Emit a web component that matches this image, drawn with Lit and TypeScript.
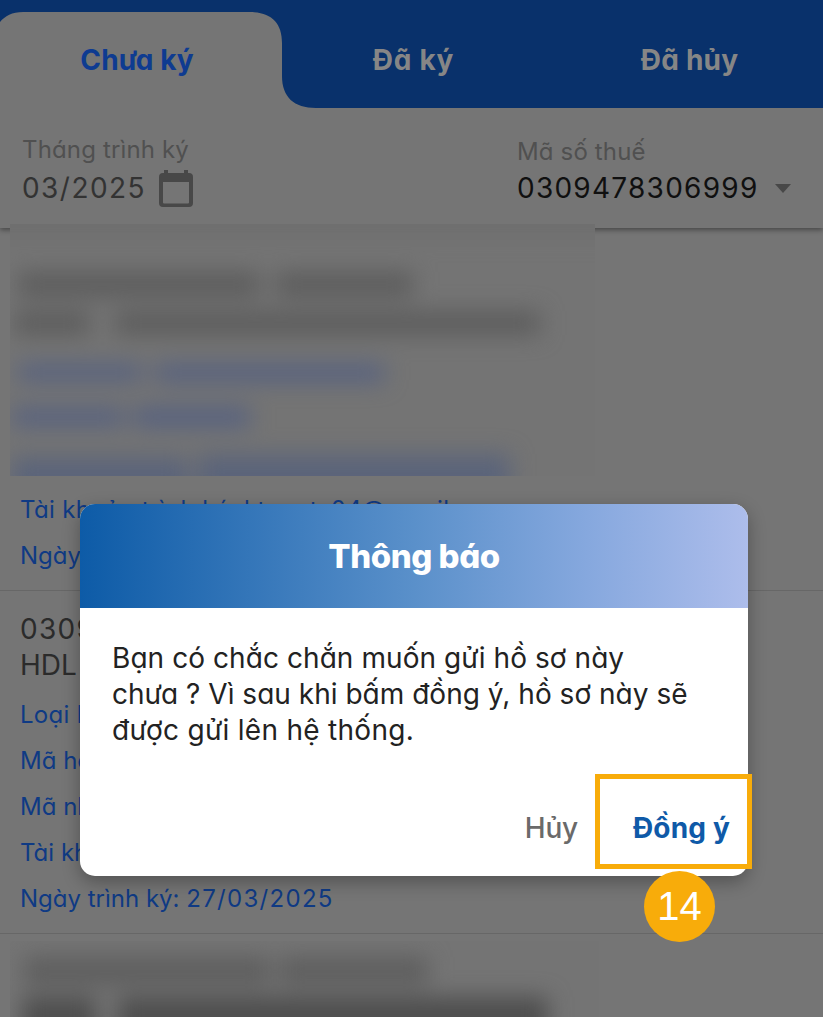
import { LitElement, html, svg, css } from "lit";
import { customElement } from "lit/decorators.js";

@customElement("redacted-block")
class RedactedBlock extends LitElement {
  static properties = { lines: { attribute: false } };
  declare lines: { x: number; y: number; w: number; h: number; c: string }[];
  static styles = css`
    :host { display: block; overflow: hidden; background: #747474; }
    svg { display: block; width: 100%; height: 100%; overflow: visible; filter: blur(11px); }
  `;
  render() {
    return html`<svg>
      ${this.lines.map((l) => svg`<rect x=${l.x} y=${l.y} width=${l.w} height=${l.h} fill=${l.c}></rect>`)}
    </svg>`;
  }
}

const DARK = "#5d5d5d";
const BLUE = "#566180";
const topLines = [
  { x: -40, y: -40, w: 680, h: 52, c: "#6e6e6e" },
  { x: 8, y: 48, w: 242, h: 25, c: DARK },
  { x: 266, y: 48, w: 137, h: 25, c: DARK },
  { x: 4, y: 87, w: 76, h: 24, c: DARK },
  { x: 105, y: 87, w: 425, h: 24, c: DARK },
  { x: 8, y: 140, w: 124, h: 17, c: BLUE },
  { x: 145, y: 140, w: 229, h: 18, c: BLUE },
  { x: 2, y: 184, w: 112, h: 18, c: BLUE },
  { x: 124, y: 183, w: 116, h: 20, c: BLUE },
  { x: 2, y: 233, w: 176, h: 40, c: "#5b647a" },
  { x: 188, y: 230, w: 312, h: 43, c: "#5b647a" },
];
const bottomLines = [
  { x: 14, y: 16, w: 246, h: 28, c: "#5e5e5e" },
  { x: 270, y: 16, w: 148, h: 28, c: "#5e5e5e" },
  { x: 12, y: 56, w: 74, h: 40, c: "#4e4e4e" },
  { x: 108, y: 56, w: 430, h: 40, c: "#4e4e4e" },
];

@customElement("app-root")
export class AppRoot extends LitElement {
  static styles = css`
    :host {
      display: block; position: relative; width: 823px; height: 1017px; overflow: hidden;
      background: #757575; font-family: Inter, "Noto Sans", sans-serif;
      font-feature-settings: "cv11"; white-space: nowrap;
    }
    .tabs { position: relative; height: 108px; padding-top: 12px; box-sizing: border-box;
      display: grid; grid-template-columns: 274px 279px 270px; }
    .shape { position: absolute; inset: 0; }
    .tab { position: relative; display: flex; align-items: center; justify-content: center;
      font-size: 28px; font-weight: 700; line-height: 36px; color: #868686; }
    .tab.active { color: #0e3b91; letter-spacing: .1px; }
    .tab.signed { letter-spacing: .7px; }
    .tab.cancelled { letter-spacing: .2px; padding-left: 3px; }
    .filters { height: 120px; box-sizing: border-box; padding: 28px 0 0 22px; display: grid;
      grid-template-columns: 495px 1fr; box-shadow: 0 2px 5px rgba(0,0,0,.4);
      clip-path: inset(0 0 -12px 0); background: #757575; }
    .field { display: flex; flex-direction: column; gap: 6px; }
    .field.tax { padding-top: 2px; gap: 4px; }
    .label { font-size: 24px; line-height: 28px; color: #505050; letter-spacing: .15px; }
    .value { display: flex; align-items: center; height: 36px; font-size: 28px; line-height: 36px; color: #333; }
    .date { letter-spacing: 1.45px; width: 137px; }
    .number { color: #101010; letter-spacing: 1.25px; width: 258px; }
    .list { position: relative; }
    .card { border-bottom: 1px solid #676767; padding: 20px 0 0 20px; height: 343px; box-sizing: border-box; color: #0f3a84; }
    .card.first { height: 363px; padding-top: 259px; }
    .head { font-size: 28px; line-height: 36px; color: #2b2b2b; }
    .head.code { letter-spacing: 1.3px; }
    .meta { font-size: 24px; line-height: 46px; }
    .meta.account { letter-spacing: .36px; }
    .meta.type { letter-spacing: .3px; }
    .when { letter-spacing: 1.3px; }
    .metas { padding-top: 9px; }
    .patch { position: absolute; left: 10px; }
    .patch.one { top: -4px; width: 585px; height: 252px; }
    .patch.two { top: 713px; width: 589px; height: 76px; }
    .dialog { position: absolute; left: 80px; top: 504px; width: 668px; height: 372px; background: #fff;
      border-radius: 15px; box-shadow: 0 6px 18px rgba(0,0,0,.3); overflow: hidden; }
    .title { height: 104px; display: flex; align-items: center; justify-content: center; color: #fff;
      font-size: 33px; font-weight: 800; letter-spacing: -.45px; line-height: 40px;
      background: linear-gradient(90deg, #0d5ba7 0%, #5a90ca 50%, #86a8de 76%, #adbdeb 100%); }
    .body { padding: 32px 32px 0; font-size: 28px; line-height: 36px; color: #222; letter-spacing: .07px; }
    .body .mid { letter-spacing: .02px; }
    .body .last { letter-spacing: .28px; }
    .actions { display: flex; justify-content: flex-end; gap: 55px; padding: 62px 18px 0 0; font-size: 28px; line-height: 36px; }
    .no { font-weight: 500; color: #6a6a6a; letter-spacing: -.2px; }
    .yes { font-weight: 700; color: #0f5aa8; letter-spacing: .17px; }
    .mark { position: absolute; left: 595px; top: 774px; width: 157px; height: 95px; box-sizing: border-box; border: 5px solid #f8ac0a; }
    .step { position: absolute; left: 643.5px; top: 870.5px; width: 71px; height: 71px; border-radius: 50%; background: #f8ac0a;
      box-sizing: border-box; padding-left: 1px;
      color: #fff; display: flex; align-items: center; justify-content: center; font: 40px/46px "Liberation Sans", sans-serif; }
  `;

  render() {
    return html`
      <div class="tabs">
        <svg class="shape" width="823" height="108">
          <path fill="#09316b" d="M0 0H823V108H316C294 108 282 97 282 76V43C282 22 271 12 249 12H23C12 12 5 16 0 22Z"></path>
        </svg>
        <div class="tab active">Chưa ký</div>
        <div class="tab signed">Đã ký</div>
        <div class="tab cancelled">Đã hủy</div>
      </div>
      <div class="filters">
        <div class="field">
          <div class="label">Tháng trình ký</div>
          <div class="value">
            <span class="date">03/2025</span>
            <svg width="34" height="37" viewBox="0 0 34 37">
              <path fill="#484848" fill-rule="evenodd" d="M5 0h4v3h16V0h4v3h1a4 4 0 0 1 4 4v26a4 4 0 0 1-4 4H4a4 4 0 0 1-4-4V7a4 4 0 0 1 4-4h1ZM4 12v20.500a1 1 0 0 0 1 1H29a1 1 0 0 0 1-1V12Z"></path>
            </svg>
          </div>
        </div>
        <div class="field tax">
          <div class="label">Mã số thuế</div>
          <div class="value">
            <span class="number">0309478306999</span>
            <svg width="16" height="9" viewBox="0 0 16 9"><path fill="#484848" d="M0 0H16L8 9Z"></path></svg>
          </div>
        </div>
      </div>
      <div class="list">
        <div class="card first">
          <div class="meta account">Tài khoản trình ký: ktvnpts04@gmail.com</div>
          <div class="meta">Ngày trình ký: 27/03/2025</div>
        </div>
        <div class="card">
          <div class="head code">0309478306999</div>
          <div class="head">HDL</div>
          <div class="metas">
            <div class="meta type">Loại hồ sơ</div>
            <div class="meta">Mã hồ sơ</div>
            <div class="meta">Mã nhân viên</div>
            <div class="meta">Tài khoản trình ký</div>
            <div class="meta">Ngày trình ký: <span class="when">27/03/2025</span></div>
          </div>
        </div>
        <redacted-block class="patch one" .lines=${topLines}></redacted-block>
        <redacted-block class="patch two" .lines=${bottomLines}></redacted-block>
      </div>
      <div class="dialog">
        <div class="title">Thông báo</div>
        <div class="body">
          <div>Bạn có chắc chắn muốn gửi hồ sơ này</div>
          <div class="mid">chưa ? Vì sau khi bấm đồng ý, hồ sơ này sẽ</div>
          <div class="last">được gửi lên hệ thống.</div>
        </div>
        <div class="actions"><span class="no">Hủy</span><span class="yes">Đồng ý</span></div>
      </div>
      <div class="mark"></div>
      <div class="step">14</div>
    `;
  }
}
